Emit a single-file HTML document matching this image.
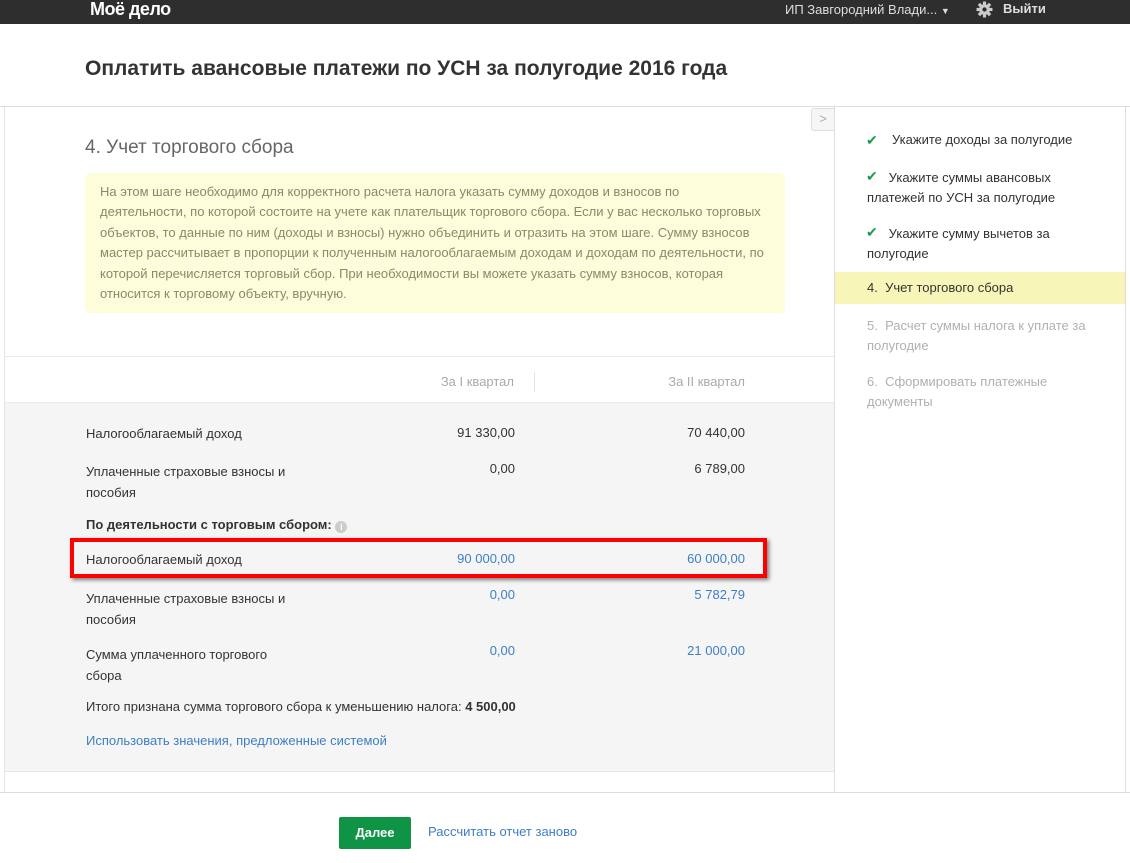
<!DOCTYPE html>
<html><head><meta charset="utf-8">
<style>
*{margin:0;padding:0;box-sizing:border-box}
body{width:1130px;height:863px;background:#fff;font-family:"Liberation Sans",Arial,sans-serif;font-size:13px;color:#333;position:relative;overflow:hidden}
.a{position:absolute;white-space:nowrap}
.r{text-align:right}
.blue{color:#3d7ec5}
</style></head><body>
<div class="a" style="left:0;top:0;width:1130px;height:24px;background:#2e2e2e"></div>
<div class="a" style="left:90px;top:-1px;color:#fff;font-size:18px;font-weight:bold;letter-spacing:-0.5px">Моё дело</div>
<div class="a" style="left:785px;top:2px;color:#ddd;font-size:13px">ИП Завгородний Влади... <span style="font-size:9px">▼</span></div>
<svg class="a" style="left:976px;top:1px" width="17" height="17" viewBox="0 0 16 16"><g fill="#ccc"><circle cx="8" cy="8" r="5"/><rect x="6.5" y="0.5" width="3" height="15"/><rect x="0.5" y="6.5" width="15" height="3"/><rect x="6.5" y="0.5" width="3" height="15" transform="rotate(45 8 8)"/><rect x="6.5" y="0.5" width="3" height="15" transform="rotate(-45 8 8)"/></g><circle cx="8" cy="8" r="2" fill="#2e2e2e"/></svg>
<div class="a" style="left:1003px;top:1px;color:#ddd;font-size:13px;font-weight:bold">Выйти</div>

<div class="a" style="left:85px;top:57px;font-size:21px;font-weight:bold;color:#333">Оплатить авансовые платежи по УСН за полугодие 2016 года</div>

<div class="a" style="left:0;top:106px;width:1130px;height:1px;background:#ddd"></div>
<!-- main panel -->
<div class="a" style="left:4px;top:107px;width:1px;height:686px;background:#e4e4e4"></div>
<div class="a" style="left:834px;top:107px;width:1px;height:686px;background:#ddd"></div>
<div class="a" style="left:1125px;top:107px;width:1px;height:686px;background:#ddd"></div>
<div class="a" style="left:811px;top:108px;width:23px;height:23px;border:1px solid #ddd;border-right:none;border-radius:3px 0 0 3px;background:#f6f6f6;color:#aaa;font-size:13px;text-align:center;line-height:20px">&gt;</div>

<div class="a" style="left:85px;top:137px;font-size:19px;color:#666">4. Учет торгового сбора</div>
<div class="a" style="left:85px;top:173px;width:700px;height:140px;background:#fdfdda;border-radius:6px"></div>
<div class="a" style="left:100px;top:182px;width:690px;white-space:normal;color:#8a8a6a;line-height:20.4px;font-size:13px">На этом шаге необходимо для корректного расчета налога указать сумму доходов и взносов по<br>деятельности, по которой состоите на учете как плательщик торгового сбора. Если у вас несколько торговых<br>объектов, то данные по ним (доходы и взносы) нужно объединить и отразить на этом шаге. Сумму взносов<br>мастер рассчитывает в пропорции к полученным налогооблагаемым доходам и доходам по деятельности, по<br>которой перечисляется торговый сбор. При необходимости вы можете указать сумму взносов, которая<br>относится к торговому объекту, вручную.</div>

<div class="a" style="left:5px;top:356px;width:829px;height:1px;background:#eaeaea"></div>
<div class="a r" style="left:380px;top:374px;width:134px;color:#aaa">За I квартал</div>
<div class="a" style="left:534px;top:372px;width:1px;height:20px;background:#e6e6e6"></div>
<div class="a r" style="left:600px;top:374px;width:145px;color:#aaa">За II квартал</div>
<div class="a" style="left:5px;top:402px;width:829px;height:370px;background:#f5f5f5;border-top:1px solid #eaeaea;border-bottom:1px solid #e6e6e6"></div>

<div class="a" style="left:86px;top:426px">Налогооблагаемый доход</div>
<div class="a r" style="left:380px;top:425px;width:135px">91 330,00</div>
<div class="a r" style="left:600px;top:425px;width:145px">70 440,00</div>
<div class="a" style="left:86px;top:461px;line-height:21px">Уплаченные страховые взносы и<br>пособия</div>
<div class="a r" style="left:380px;top:461px;width:135px">0,00</div>
<div class="a r" style="left:600px;top:461px;width:145px">6 789,00</div>
<div class="a" style="left:86px;top:517px;font-weight:bold">По деятельности с торговым сбором: <span style="display:inline-block;width:12px;height:12px;border-radius:50%;background:#ccc;color:#fff;font-size:9px;text-align:center;line-height:12px;vertical-align:-1px">i</span></div>

<div class="a" style="left:70px;top:538px;width:697px;height:40px;border:4px solid #f00;box-shadow:2px 2px 4px rgba(0,0,0,.5)"></div>
<div class="a" style="left:86px;top:552px">Налогооблагаемый доход</div>
<div class="a r blue" style="left:380px;top:551px;width:135px">90 000,00</div>
<div class="a r blue" style="left:600px;top:551px;width:145px">60 000,00</div>

<div class="a" style="left:86px;top:588px;line-height:21px">Уплаченные страховые взносы и<br>пособия</div>
<div class="a r blue" style="left:380px;top:587px;width:135px">0,00</div>
<div class="a r blue" style="left:600px;top:587px;width:145px">5 782,79</div>
<div class="a" style="left:86px;top:644px;line-height:21px">Сумма уплаченного торгового<br>сбора</div>
<div class="a r blue" style="left:380px;top:643px;width:135px">0,00</div>
<div class="a r blue" style="left:600px;top:643px;width:145px">21 000,00</div>
<div class="a" style="left:86px;top:699px">Итого признана сумма торгового сбора к уменьшению налога: <b>4 500,00</b></div>
<div class="a blue" style="left:86px;top:733px">Использовать значения, предложенные системой</div>

<!-- sidebar -->
<div class="a" style="left:835px;top:272px;width:290px;height:32px;background:#f7f6b8"></div>
<div class="a" style="left:866px;top:132px;color:#1a9c4a;font-size:14px">✔</div>
<div class="a" style="left:892px;top:132px">Укажите доходы за полугодие</div>
<div class="a" style="left:866px;top:168px;color:#1a9c4a;font-size:14px">✔</div>
<div class="a" style="left:867px;top:168px;line-height:20px">&nbsp;&nbsp;&nbsp;&nbsp;&nbsp;&nbsp;Укажите суммы авансовых<br>платежей по УСН за полугодие</div>
<div class="a" style="left:866px;top:224px;color:#1a9c4a;font-size:14px">✔</div>
<div class="a" style="left:867px;top:224px;line-height:20px">&nbsp;&nbsp;&nbsp;&nbsp;&nbsp;&nbsp;Укажите сумму вычетов за<br>полугодие</div>
<div class="a" style="left:867px;top:280px">4.&nbsp;&nbsp;Учет торгового сбора</div>
<div class="a" style="left:867px;top:316px;line-height:20px;color:#b0b0b0">5.&nbsp;&nbsp;Расчет суммы налога к уплате за<br>полугодие</div>
<div class="a" style="left:867px;top:372px;line-height:20px;color:#b0b0b0">6.&nbsp;&nbsp;Сформировать платежные<br>документы</div>

<!-- footer -->
<div class="a" style="left:0;top:792px;width:1130px;height:1px;background:#ddd"></div>
<div class="a" style="left:339px;top:817px;width:72px;height:32px;background:#0e9444;border-radius:2px;color:#fff;font-weight:bold;text-align:center;line-height:32px">Далее</div>
<div class="a blue" style="left:428px;top:824px">Рассчитать отчет заново</div>
</body></html>
